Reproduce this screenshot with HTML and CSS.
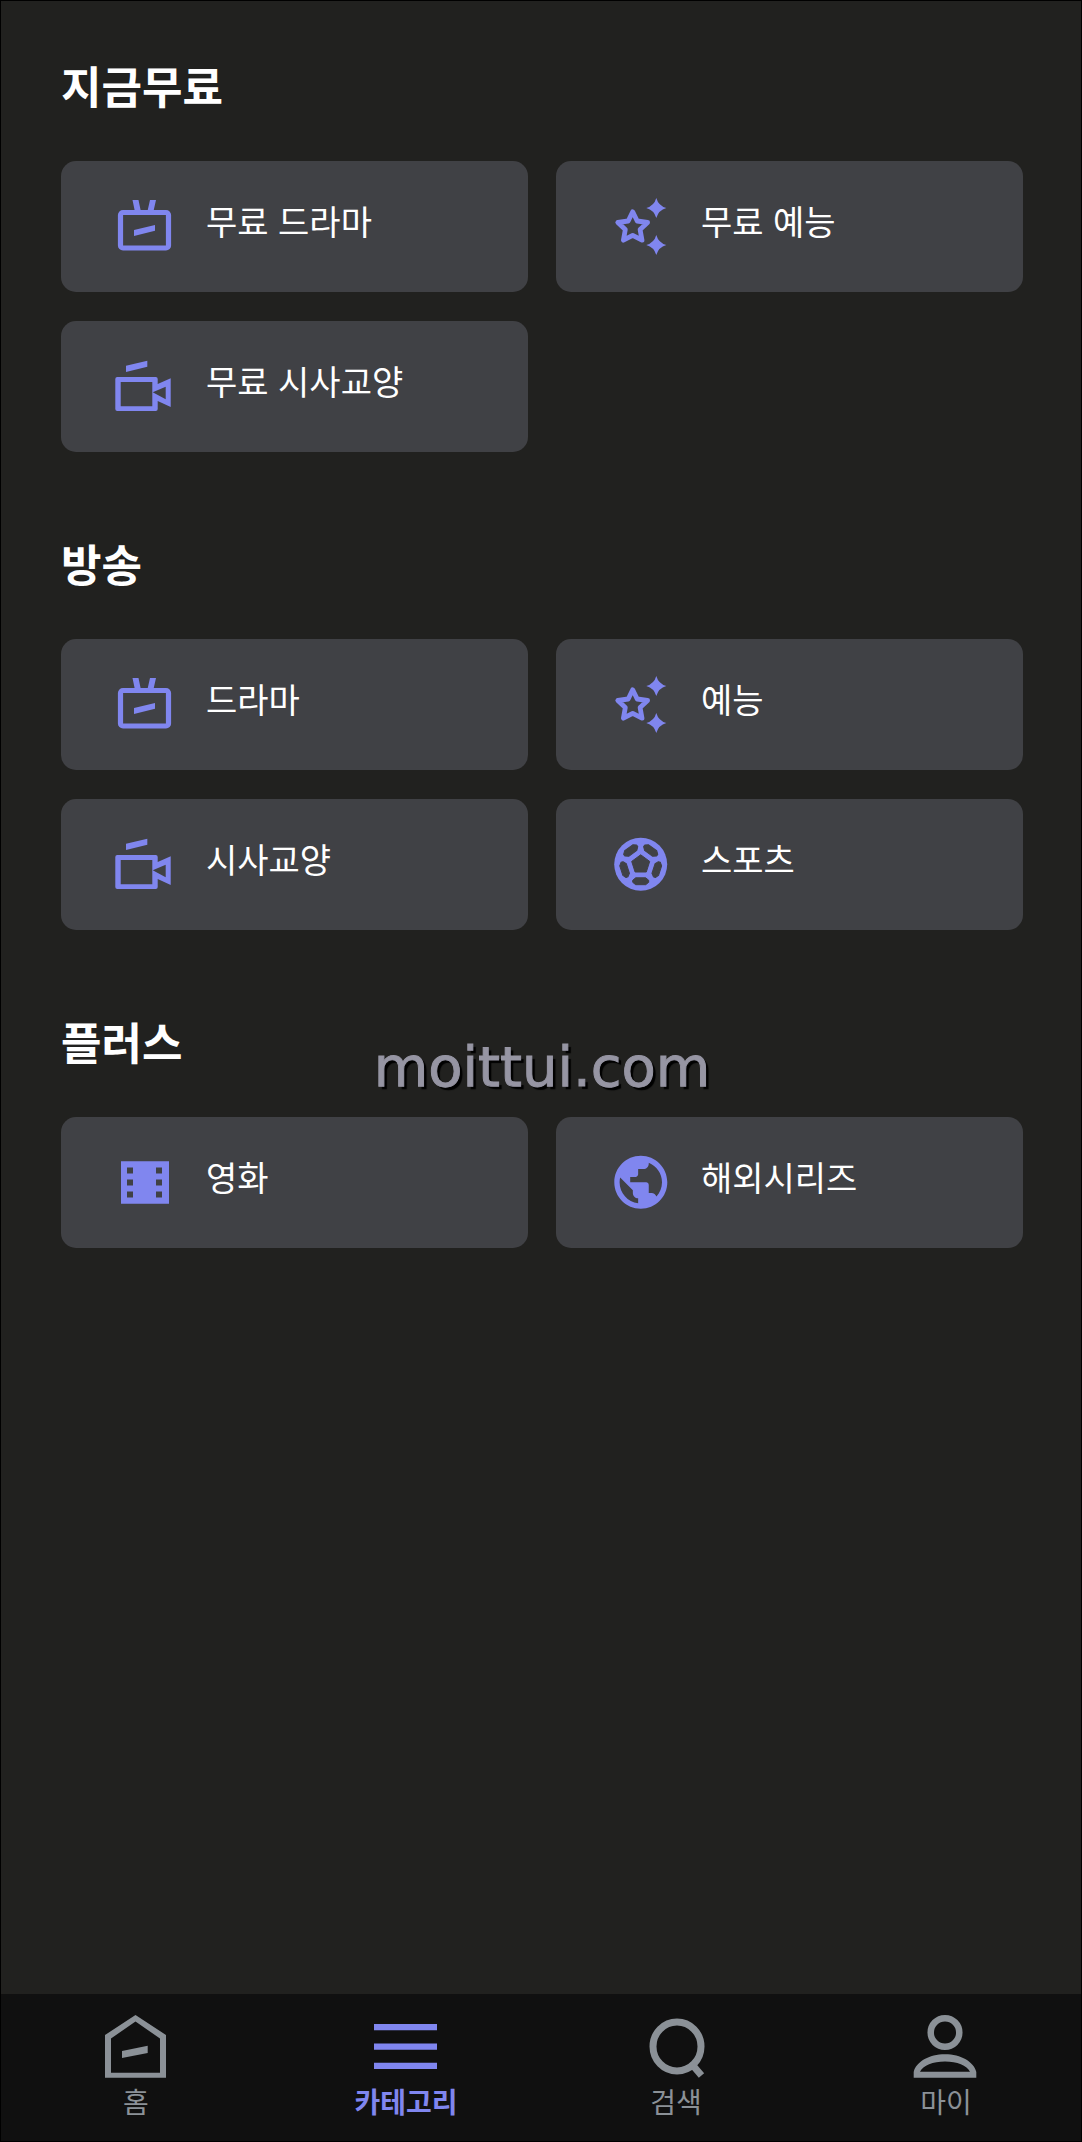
FILE: index.html
```html
<!DOCTYPE html>
<html lang="ko">
<head>
<meta charset="utf-8">
<meta name="viewport" content="width=device-width, initial-scale=1">
<title>카테고리</title>
<link rel="stylesheet" href="styles.css">
</head>
<body>
<svg class="sprite" aria-hidden="true">
  <symbol id="icon-tv" viewBox="0 0 60 60">
    <rect x="6.5" y="15.5" width="48" height="35.5" rx="2.5" fill="none" stroke="currentColor" stroke-width="5.2"/>
    <path d="M18.5 3h6L27 15h-6zM36 3h6l-2.7 12h-6zM20 33l21-5v5.8L20 39z" fill="currentColor"/>
  </symbol>
  <symbol id="icon-camera" viewBox="0 0 60 60">
    <path fill="currentColor" fill-rule="evenodd" d="M1.3 22q0-2 2-2H41.7q2 0 2 2v5l13-5.7V50l-13-6v8q0 2-2 2H3.3q-2 0-2-2zM6.7 25v24.3h31.6V25zM38.7 35.3l13-5.6v12.6z"/>
    <path fill="currentColor" d="M12 8.7l21.3-5v6L12 15z"/>
  </symbol>
  <symbol id="icon-stars" viewBox="0 0 60 60">
    <path fill="none" stroke="currentColor" stroke-width="4.8" stroke-linejoin="round" d="M23.7 14.8l4.5 9.2 10.4 1.5-7.5 7.1 1.9 10.6-9.3-4.9-9.3 4.9 1.9-10.6-7.5-7.1L19.2 24z"/>
    <path fill="currentColor" d="M47.3 1q2.2 7.8 10 10-7.8 2.2-10 10-2.2-7.8-10-10 7.8-2.2 10-10zM47.3 38q2.2 7.8 10 10-7.8 2.2-10 10-2.2-7.8-10-10 7.8-2.2 10-10z"/>
  </symbol>
  <symbol id="icon-ball" viewBox="0 0 60 60">
    <mask id="ball-panels">
      <rect width="60" height="60" fill="#fff"/>
      <g transform="translate(31.7 29.3)" fill="#000" stroke="#000" stroke-width="1" stroke-linejoin="round">
        <path d="M0-9.5L9-2.9 5.6 7.7H-5.6L-9-2.9z"/>
        <path id="ball-panel" d="M-5 13.5H5L8 16v2l-3 2.4H-5L-8 18v-2z"/>
        <use href="#ball-panel" transform="rotate(72)"/>
        <use href="#ball-panel" transform="rotate(144)"/>
        <use href="#ball-panel" transform="rotate(216)"/>
        <use href="#ball-panel" transform="rotate(288)"/>
      </g>
    </mask>
    <circle cx="31.7" cy="29.3" r="26.5" fill="currentColor" mask="url(#ball-panels)"/>
  </symbol>
  <symbol id="icon-film" viewBox="0 0 60 60">
    <path fill="currentColor" fill-rule="evenodd" d="M7 8.3h48v42.4H7zM13 14.5v6h6v-6zM13 26.5v6h6v-6zM13 38.5v6h6v-6zM42 14.5v6h6v-6zM42 26.5v6h6v-6zM42 38.5v6h6v-6z"/>
  </symbol>
  <symbol id="icon-globe" viewBox="0 0 60 60">
    <path transform="translate(0 -2.5) scale(2.65)" fill="currentColor" d="M12 2C6.48 2 2 6.48 2 12s4.48 10 10 10 10-4.48 10-10S17.52 2 12 2zm-1 17.93c-3.95-.49-7-3.85-7-7.93 0-.62.08-1.21.21-1.79L9 15v1c0 1.1.9 2 2 2v1.93zm6.9-2.54c-.26-.81-1-1.39-1.9-1.39h-1v-3c0-.55-.45-1-1-1H8v-2h2c.55 0 1-.45 1-1V7h2c1.1 0 2-.9 2-2v-.41c2.93 1.19 5 4.06 5 7.41 0 2.08-.8 3.97-2.1 5.39z"/>
  </symbol>
</svg>

<main class="content">
  <section class="group">
    <h2 class="group-title">지금무료</h2>
    <ul class="cards">
      <li><a class="card" href="#"><svg class="card-icon" aria-hidden="true"><use href="#icon-tv"/></svg><span class="card-label">무료 드라마</span></a></li>
      <li><a class="card" href="#"><svg class="card-icon" aria-hidden="true"><use href="#icon-stars"/></svg><span class="card-label">무료 예능</span></a></li>
      <li><a class="card" href="#"><svg class="card-icon" aria-hidden="true"><use href="#icon-camera"/></svg><span class="card-label">무료 시사교양</span></a></li>
    </ul>
  </section>

  <section class="group">
    <h2 class="group-title">방송</h2>
    <ul class="cards">
      <li><a class="card" href="#"><svg class="card-icon" aria-hidden="true"><use href="#icon-tv"/></svg><span class="card-label">드라마</span></a></li>
      <li><a class="card" href="#"><svg class="card-icon" aria-hidden="true"><use href="#icon-stars"/></svg><span class="card-label">예능</span></a></li>
      <li><a class="card" href="#"><svg class="card-icon" aria-hidden="true"><use href="#icon-camera"/></svg><span class="card-label">시사교양</span></a></li>
      <li><a class="card" href="#"><svg class="card-icon" aria-hidden="true"><use href="#icon-ball"/></svg><span class="card-label">스포츠</span></a></li>
    </ul>
  </section>

  <section class="group">
    <h2 class="group-title">플러스</h2>
    <ul class="cards">
      <li><a class="card" href="#"><svg class="card-icon" aria-hidden="true"><use href="#icon-film"/></svg><span class="card-label">영화</span></a></li>
      <li><a class="card" href="#"><svg class="card-icon" aria-hidden="true"><use href="#icon-globe"/></svg><span class="card-label">해외시리즈</span></a></li>
    </ul>
    <p class="watermark">moittui.com</p>
  </section>
</main>

<nav class="tabs" aria-label="주 메뉴">
  <a class="tab" href="#">
    <svg class="tab-icon" viewBox="0 0 64 64" aria-hidden="true"><path fill="currentColor" fill-rule="evenodd" d="M31.5 1L62 21v42.7H1V21zM31.5 7.5L7 24.5v34.2h49V24.5z"/><path fill="currentColor" d="M18 37l25.7-5.3V39L18 44z"/></svg>
    <span>홈</span>
  </a>
  <a class="tab tab-active" href="#" aria-current="page">
    <svg class="tab-icon" viewBox="0 0 64 64" aria-hidden="true"><path fill="currentColor" d="M0 10h63v6.3H0zM0 29.4h63v6.3H0zM0 48.7h63V55H0z"/></svg>
    <span>카테고리</span>
  </a>
  <a class="tab" href="#">
    <svg class="tab-icon" viewBox="0 0 64 64" aria-hidden="true"><ellipse cx="33" cy="32.5" rx="24" ry="24.5" fill="none" stroke="currentColor" stroke-width="7"/><path d="M48.500 51l9 10.500" stroke="currentColor" stroke-width="7"/></svg>
    <span>검색</span>
  </a>
  <a class="tab" href="#">
    <svg class="tab-icon" viewBox="0 0 64 64" aria-hidden="true"><circle cx="31" cy="18.5" r="14.3" fill="none" stroke="currentColor" stroke-width="6.5"/><path fill="currentColor" fill-rule="evenodd" d="M-.3 63.7V58C2 48 15 40.3 31 40.300S60 48 62.300 58v5.700zM6 57.700h50C53 51.500 43 47.500 31 47.500S9 51.500 6 57.700z"/></svg>
    <span>마이</span>
  </a>
</nav>
</body>
</html>
```
FILE: styles.css
```css
* {
  box-sizing: border-box;
}

body {
  margin: 0;
  min-height: 100vh;
  display: flex;
  flex-direction: column;
  border: 1px solid #000;
  background: #21211f;
  color: #fff;
  font-family: "Noto Sans CJK KR", "Noto Sans", sans-serif;
}

.sprite {
  position: absolute;
  width: 0;
  height: 0;
}

.content {
  flex: 1;
  display: flex;
  flex-direction: column;
  gap: 82px;
  padding: 54px 58px 82px 60px;
}

.group {
  position: relative;
}

.group-title {
  margin: 0 0 46px;
  font-size: 44px;
  font-weight: 700;
  line-height: 60px;
}

.group + .group {
  margin-top: -1px;
}

.cards {
  display: grid;
  grid-template-columns: 1fr 1fr;
  gap: 29px 28px;
  margin: 0;
  padding: 0;
  list-style: none;
}

.card {
  display: flex;
  align-items: flex-start;
  gap: 32px;
  padding: 36px 53px 35px;
  border-radius: 15px;
  background: #404145;
  color: #fff;
  text-decoration: none;
}

.card-icon {
  flex: none;
  width: 60px;
  height: 60px;
  color: #8086ef;
}

.card-label {
  font-size: 34px;
  line-height: 48px;
}

.watermark {
  position: absolute;
  top: 26px;
  left: 0;
  right: 0;
  margin: 0;
  color: #9695a3;
  font-family: "DejaVu Sans", sans-serif;
  font-size: 56px;
  line-height: 60px;
  text-align: center;
  text-shadow: 3px 3px 1px #000;
  -webkit-text-stroke: 1px #9695a3;
  pointer-events: none;
}

.tabs {
  display: grid;
  grid-template-columns: repeat(4, 1fr);
  padding: 20px 0;
  background: #101010;
}

.tab {
  display: flex;
  flex-direction: column;
  align-items: center;
  gap: 3px;
  color: #8b9197;
  font-size: 28px;
  line-height: 40px;
  text-decoration: none;
}

.tab-active {
  color: #8086ef;
  font-weight: 700;
}

.tab-icon {
  width: 64px;
  height: 64px;
  overflow: visible;
}
```
